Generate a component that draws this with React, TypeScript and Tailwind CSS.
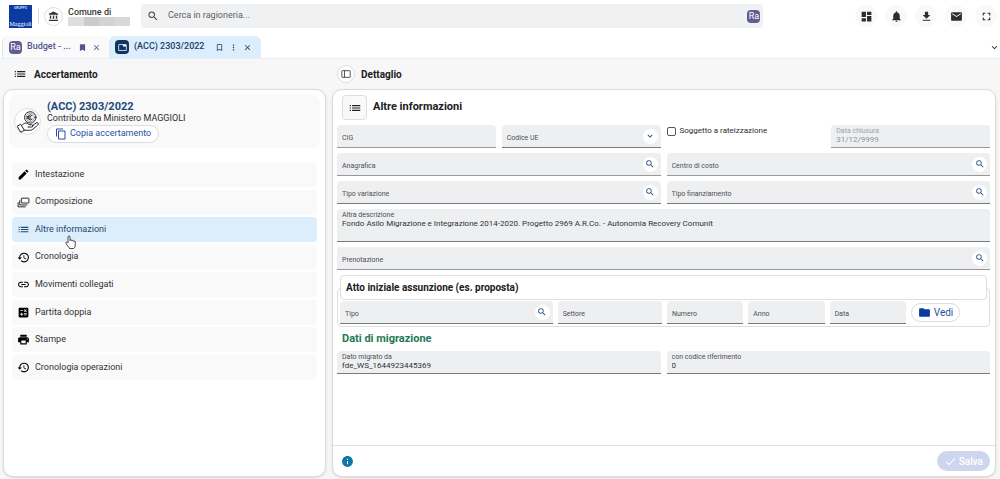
import React, { useId, useState } from 'react';
import type { IconType } from 'react-icons';
import {
  MdAccountBalance,
  MdBookmark,
  MdBookmarkBorder,
  MdCalculate,
  MdCheck,
  MdClose,
  MdContentCopy,
  MdDashboard,
  MdDownload,
  MdEdit,
  MdEmail,
  MdExpandMore,
  MdFolder,
  MdFullscreen,
  MdHistory,
  MdInfo,
  MdLink,
  MdList,
  MdMoreVert,
  MdNotifications,
  MdPrint,
  MdSearch,
  MdTab,
} from 'react-icons/md';

const Logo = () => (
  <svg viewBox="0 0 23 23" className="size-[23px] shrink-0" role="img" aria-label="Maggioli">
    <rect width="23" height="23" fill="#0b3aa0" />
    <text x="11.5" y="4" textAnchor="middle" fontSize="3" fontWeight="700" fill="#dbe5ff" fontFamily="Liberation Sans">GRUPPO</text>
    <text x="11.5" y="21" textAnchor="middle" fontSize="6" fill="#fff" fontFamily="Liberation Serif">Maggioli</text>
  </svg>
);

const CardsIcon = ({ className }: { className?: string }) => (
  <svg viewBox="0 0 24 24" className={className} fill="none" stroke="currentColor" strokeWidth="1.5">
    <rect x="8" y="4" width="14" height="9" rx="1" />
    <path d="M5 8v8.500h14M2 11.500v8.500h14" />
  </svg>
);

const PanelIcon = ({ className }: { className?: string }) => (
  <svg viewBox="0 0 24 24" className={className} fill="none" stroke="currentColor" strokeWidth="2">
    <rect x="2" y="4" width="20" height="16" rx="1" />
    <path d="M8.500 4v16" />
  </svg>
);

const EuroHandIcon = ({ className }: { className?: string }) => (
  <svg viewBox="0 0 48 48" className={className} fill="none" stroke="#111" strokeWidth="2" strokeLinejoin="round" strokeLinecap="round">
    <circle cx="29" cy="14" r="12.500" />
    <circle cx="29" cy="14" r="9" strokeWidth="0.9" />
    <path d="M33 10a5.500 5.500 0 1 0 0 8M22 12.600h8M22 15.600h8" />
    <path d="M1 33l7-4 8 13-7 4zM11 31c4-5 9-6 13-3l2 2h6c4 0 4 5 0 5h-8M34 32l8-6c4-2 6 2 3 5L33 41c-2 1-4 1-6 1H16" />
  </svg>
);

const HandCursor = () => (
  <svg viewBox="0 0 22 28" className="pointer-events-none absolute left-[53px] top-[18px] z-10 h-[14px] w-[11px]" fill="#fff" stroke="#333" strokeWidth="1.8" strokeLinejoin="round">
    <path d="M6 16V4c0-3 4-3 4 0v7c0-2 4-2 4 1 0-2 3-2 3.500 1 0-2 3-1.500 3 1v6c0 4-2 6-3 7H9c-1-3-5-6-7-10-1-2 1-4 3-2z" />
  </svg>
);

const RaBadge = () => (
  <span className="flex size-[13px] shrink-0 items-center justify-center rounded-[4px] bg-[#5f5d92] text-[9px] leading-none text-white">
    Ra
  </span>
);

interface FieldProps {
  label: string;
  value?: string;
  icon?: IconType;
  strong?: boolean;
  disabled?: boolean;
}

/** Filled field: the label floats to the top once there is a value */
const Field: React.FC<FieldProps> = ({ label, value, icon: Icon, strong, disabled }) => {
  const id = useId();
  return (
    <div className={`flex h-[23px] min-w-0 items-center rounded-t-[4px] border-b bg-[#eeeff1] pl-[5px] pr-[3px] ${strong ? 'border-[#77797c]' : 'border-[#96989b]'}`}>
      <div className={`grid min-w-0 flex-1 ${disabled ? 'opacity-50' : ''}`}>
        <label
          htmlFor={id}
          className={`col-start-1 row-start-1 truncate text-[7px] text-[#4c4f53] ${value ? 'self-start leading-[8px]' : 'self-center pt-[3px] leading-[18px]'}`}
        >
          {label}
        </label>
        <input
          id={id}
          defaultValue={value}
          disabled={disabled}
          className={`col-start-1 min-w-0 bg-transparent text-[8px] text-[#303336] outline-none ${value ? 'row-start-2 h-[10px]' : 'row-start-1 h-[18px] pt-[3px]'}`}
        />
      </div>
      {Icon && (
        <button type="button" aria-label={`Cerca ${label}`} className="flex size-[15px] shrink-0 items-center justify-center rounded-full bg-white text-[#274b7a]">
          <Icon className="size-[10px]" />
        </button>
      )}
    </div>
  );
};

const SelectField = ({ label }: { label: string }) => {
  const id = useId();
  return (
    <div className="flex h-[23px] min-w-0 items-center rounded-t-[4px] border-b border-[#77797c] bg-[#eeeff1] pl-[5px] pr-[3px]">
      <div className="grid min-w-0 flex-1">
        <label htmlFor={id} className="col-start-1 row-start-1 pt-[3px] text-[7px] leading-[18px] text-[#4c4f53]">{label}</label>
        <select id={id} className="col-start-1 row-start-1 h-[18px] min-w-0 appearance-none bg-transparent text-[8px] outline-none">
          <option value="" />
        </select>
      </div>
      <span className="flex size-[15px] shrink-0 items-center justify-center rounded-full bg-white text-[#274b7a]">
        <MdExpandMore className="size-[10px]" />
      </span>
    </div>
  );
};

const NAV_ITEMS = [
  { label: 'Intestazione', icon: MdEdit },
  { label: 'Composizione', icon: CardsIcon },
  { label: 'Altre informazioni', icon: MdList },
  { label: 'Cronologia', icon: MdHistory },
  { label: 'Movimenti collegati', icon: MdLink },
  { label: 'Partita doppia', icon: MdCalculate },
  { label: 'Stampe', icon: MdPrint },
  { label: 'Cronologia operazioni', icon: MdHistory },
];

const HEADER_ACTIONS = [
  { label: 'Dashboard', icon: MdDashboard },
  { label: 'Notifiche', icon: MdNotifications },
  { label: 'Download', icon: MdDownload },
  { label: 'Messaggi', icon: MdEmail },
  { label: 'Schermo intero', icon: MdFullscreen },
];

const Header = () => (
  <header className="flex h-8 items-center bg-white pl-[9px] pr-[3px] shadow-[0_1px_4px_rgba(0,0,0,0.08)]">
    <Logo />
    <span className="ml-[6px] h-4 w-px bg-[#dcdcdc]" />
    <span className="ml-[5px] flex size-[19px] shrink-0 items-center justify-center rounded-full border border-[#dedede]">
      <MdAccountBalance className="size-[11px] text-[#333]" />
    </span>
    <div className="ml-[5px] w-[62px] shrink-0">
      <p className="text-[9px] font-medium leading-[10px] text-[#3a3a3a]">Comune di</p>
      <div className="flex h-[9px]">
        <span className="flex-1 bg-[#dedede]" />
        <span className="flex-1 bg-[#cbcbcb]" />
        <span className="flex-1 bg-[#d3d3d3]" />
        <span className="flex-1 bg-[#d9d9d9]" />
      </div>
    </div>
    <div className="ml-[11px] flex h-6 w-[63%] items-center rounded-[4px] bg-[#f0f1f3] pl-[6px] pr-[3px]">
      <MdSearch className="size-3 text-[#444]" />
      <input type="search" aria-label="Cerca in ragioneria" placeholder="Cerca in ragioneria..." className="ml-[9px] min-w-0 flex-1 bg-transparent text-[9px] outline-none placeholder:text-[#5c5f63]" />
      <RaBadge />
    </div>
    <div className="ml-auto flex gap-2">
      {HEADER_ACTIONS.map(({ label, icon: Icon }) => (
        <button key={label} type="button" aria-label={label} className="flex size-[22px] items-center justify-center rounded-full bg-[#f9f9f9] text-[#2d2d2d]">
          <Icon className="size-[13px]" />
        </button>
      ))}
    </div>
  </header>
);

const TabBar = () => (
  <div className="flex h-[27px] items-end border-b border-[#e4f0fb] bg-white pl-[2px]">
    <div className="flex h-[22px] w-[107px] items-center rounded-t-[6px] border-l border-[#e4e4e4] bg-[#fafafa] pl-[6px] pr-2 text-[#55548a]">
      <RaBadge />
      <a href="#budget" className="ml-[5px] text-[9px] font-medium">Budget - ...</a>
      <button type="button" aria-label="Segnalibro Budget" className="ml-auto"><MdBookmark className="size-[9px]" /></button>
      <button type="button" aria-label="Chiudi Budget" className="ml-[5px]"><MdClose className="size-[9px]" /></button>
    </div>
    <div className="flex h-[22px] w-[152px] items-center rounded-t-[6px] bg-[#dcedfc] pl-[6px] pr-[9px] text-[#173e6b]">
      <span className="flex size-[14px] items-center justify-center rounded-[4px] bg-[#0f3562] text-white">
        <MdTab className="size-[9px]" />
      </span>
      <a href="#acc" className="ml-[5px] text-[9px] font-medium">(ACC) 2303/2022</a>
      <button type="button" aria-label="Segnalibro" className="ml-auto"><MdBookmarkBorder className="size-[9px]" /></button>
      <button type="button" aria-label="Altro" className="ml-[5px]"><MdMoreVert className="size-[9px]" /></button>
      <button type="button" aria-label="Chiudi" className="ml-[5px]"><MdClose className="size-[9px]" /></button>
    </div>
    <button type="button" aria-label="Elenco schede" className="mb-[5px] ml-auto"><MdExpandMore className="size-[11px]" /></button>
  </div>
);

const Sidebar = () => {
  const [active, setActive] = useState('Altre informazioni');
  return (
    <aside className="flex min-w-0 flex-[323] flex-col">
      <div className="flex h-[30px] items-center pl-[10px]">
        <MdList className="size-[14px]" />
        <h2 className="ml-[7px] text-[10px] font-bold text-[#202020]">Accertamento</h2>
      </div>
      <div className="flex-1 rounded-[10px] border border-[#dcdcdc] bg-white px-[5px] pt-[5px] shadow-sm">
        <div className="flex h-[53px] items-center rounded-[8px] bg-[#f9f9f9] pl-[5px]">
          <span className="flex size-[27px] shrink-0 items-center justify-center rounded-full border border-[#dedede] bg-white">
            <EuroHandIcon className="size-[22px]" />
          </span>
          <div className="ml-[6px] min-w-0">
            <h1 className="text-[11px] font-bold leading-[13px] text-[#214a78]">(ACC) 2303/2022</h1>
            <p className="text-[9px] leading-[11px] text-[#2e2e2e]">Contributo da Ministero MAGGIOLI</p>
            <button type="button" className="mt-px flex h-[18px] items-center gap-[3px] rounded-full border border-[#d9dce2] bg-white px-[7px] text-[9px] text-[#274fa3]">
              <MdContentCopy className="size-3" />
              Copia accertamento
            </button>
          </div>
        </div>
        <nav className="mt-[14px] flex min-h-[218px] flex-col justify-between px-[3px]">
          {NAV_ITEMS.map(({ label, icon: Icon }) => (
            <a
              key={label}
              href="#sezione"
              onClick={() => setActive(label)}
              className={`relative flex h-[25px] items-center gap-[5px] rounded-[4px] pl-[5px] text-[9px] ${active === label ? 'bg-[#dcedfc] text-[#1d4a6e]' : 'bg-[#f9f9f9] text-[#333]'}`}
            >
              <Icon className={`size-[13px] ${active === label ? '' : 'text-black'}`} />
              {label}
              {label === 'Altre informazioni' && <HandCursor />}
            </a>
          ))}
        </nav>
      </div>
    </aside>
  );
};

const Detail = () => (
  <main className="flex min-w-0 flex-[664] flex-col">
    <div className="flex h-[30px] items-center pl-[5px]">
      <button type="button" aria-label="Mostra pannello" className="flex size-[18px] items-center justify-center rounded-full border border-[#dedede] bg-white text-[#333]">
        <PanelIcon className="size-[10px]" />
      </button>
      <h2 className="ml-[6px] text-[10px] font-bold text-[#202020]">Dettaglio</h2>
    </div>
    <form className="flex flex-1 flex-col rounded-[10px] border border-[#dcdcdc] bg-white shadow-sm">
      <div className="flex flex-1 flex-col gap-[5px] pl-1 pr-[5px] pt-[5px]">
        <div className="flex h-[25px] items-center gap-[6px] pl-[5px]">
          <span className="flex size-[25px] items-center justify-center rounded-[4px] border border-[#dedede] bg-[#f9f9f9]">
            <MdList className="size-[14px]" />
          </span>
          <h3 className="text-[11px] font-bold text-[#202020]">Altre informazioni</h3>
        </div>
        <div className="grid grid-cols-4 gap-[6px]">
          <Field label="CIG" />
          <SelectField label="Codice UE" />
          <label className="flex h-3 items-center gap-1 text-[8px] text-[#2e2e2e]">
            <input type="checkbox" className="size-[9px] appearance-none rounded-[2px] border border-[#555] checked:bg-[#274fa3]" />
            Soggetto a rateizzazione
          </label>
          <Field label="Data chiusura" value="31/12/9999" disabled />
        </div>
        <div className="grid grid-cols-2 gap-x-[6px] gap-y-[5px]">
          <Field label="Anagrafica" icon={MdSearch} />
          <Field label="Centro di costo" icon={MdSearch} />
          <Field label="Tipo variazione" icon={MdSearch} strong />
          <Field label="Tipo finanziamento" icon={MdSearch} strong />
        </div>
        <div className="flex h-[33px] flex-col rounded-t-[4px] border-b border-[#77797c] bg-[#eeeff1] px-[5px] pt-[2px]">
          <label htmlFor="descrizione" className="text-[7px] leading-[8px] text-[#4c4f53]">Altra descrizione</label>
          <textarea
            id="descrizione"
            className="flex-1 resize-none bg-transparent text-[8px] leading-[10px] text-[#303336] outline-none"
            defaultValue="Fondo Asilo Migrazione e Integrazione 2014-2020. Progetto 2969 A.R.Co. - Autonomia Recovery Comunit"
          />
        </div>
        <Field label="Prenotazione" icon={MdSearch} />
        <fieldset className="min-w-0">
          {/* The title box overlaps the top edge of the group frame */}
          <legend className="contents">
            <span className="relative mx-[3px] flex h-[25px] items-center rounded-[4px] border border-[#dedede] bg-white pl-[5px] text-[10px] font-bold text-[#202020]">
              Atto iniziale assunzione (es. proposta)
            </span>
          </legend>
          <div className="-mt-3 grid grid-cols-[212fr_104fr_76fr_76fr_76fr_76fr] items-center gap-[5px] rounded-[4px] border border-[#dedede] px-[2px] pb-[2px] pt-3">
            <Field label="Tipo" icon={MdSearch} strong />
            <Field label="Settore" strong />
            <Field label="Numero" strong />
            <Field label="Anno" strong />
            <Field label="Data" strong />
            <button type="button" className="flex h-[19px] items-center gap-[3px] justify-self-start rounded-full border border-[#d9dce2] bg-white px-[6px] text-[10px] text-[#274fa3]">
              <MdFolder className="size-[13px] text-[#0b3aa0]" />
              Vedi
            </button>
          </div>
        </fieldset>
        <h3 className="pl-[5px] text-[11px] font-bold leading-[14px] text-[#1f7a55]">Dati di migrazione</h3>
        <div className="grid grid-cols-2 gap-[6px]">
          <Field label="Dato migrato da" value="fde_WS_1644923445369" strong />
          <Field label="con codice riferimento" value="0" strong />
        </div>
      </div>
      <footer className="flex h-[31px] items-center justify-between border-t border-[#dedede] pl-2 pr-[5px]">
        <button type="button" aria-label="Informazioni" className="text-[#0f77a8]"><MdInfo className="size-[13px]" /></button>
        <button type="submit" disabled className="flex h-5 items-center gap-[2px] rounded-full bg-[#cdd6ee] px-[7px] text-[10px] font-medium text-white">
          <MdCheck className="size-[13px]" />
          Salva
        </button>
      </footer>
    </form>
  </main>
);

const App: React.FC = () => (
  <div className="flex min-h-screen flex-col bg-[#f7f7f7] font-['Roboto',sans-serif] text-[#202020]">
    <Header />
    <TabBar />
    <div className="flex flex-1 gap-[6px] pb-[2px] pl-[3px] pr-1">
      <Sidebar />
      <Detail />
    </div>
  </div>
);

export default App;
